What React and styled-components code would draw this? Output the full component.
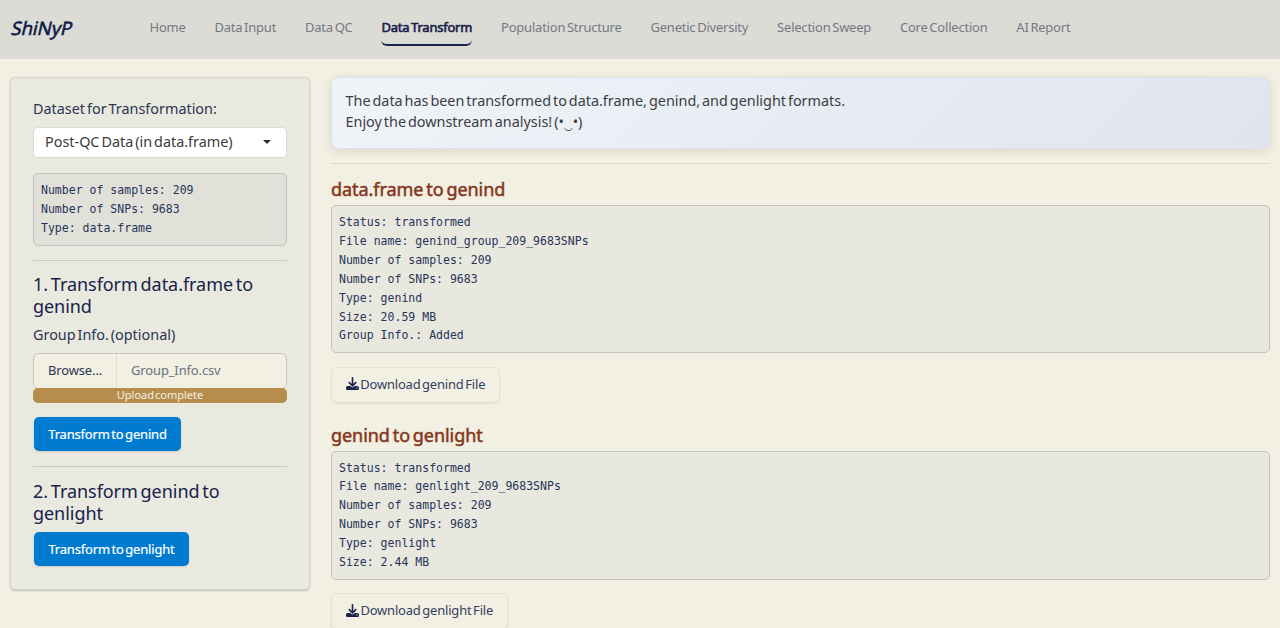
import React from "react";
import styled, { createGlobalStyle } from "styled-components";

const GlobalStyle = createGlobalStyle`
  * { box-sizing: border-box; }
  html, body { margin: 0; padding: 0; overflow: hidden; }
  body {
    background: #f2efe3;
    color: #2b3452;
    font-family: "Noto Sans", "Open Sans", sans-serif;
    font-size: 14.4px;
    line-height: 1.5;
    word-spacing: -1.8px;
  }
`;

const Page = styled.div`
  height: 628px;
  overflow: hidden;
`;

const Navbar = styled.header`
  display: flex;
  align-items: center;
  height: 59px;
  padding: 0 11px 4px 12px;
  background: #dcdbd5;
`;

const Brand = styled.div`
  width: 137.5px;
  color: #0b1a45;
  font-size: 18.5px;
  -webkit-text-stroke: 0.5px currentColor;

  span {
    display: inline-block;
    transform: skewX(-13deg);
    letter-spacing: -0.1px;
  }
`;

const Nav = styled.nav`
  display: flex;
  gap: 28.9px;
`;

const NavLink = styled.a`
  height: 37px;
  padding-top: 9px;
  border-bottom: 2px solid ${(p) => (p.$active ? "#1a2650" : "transparent")};
  border-radius: 6px;
  color: ${(p) => (p.$active ? "#17224a" : "#737885")};
  font-size: 12.96px;
  letter-spacing: -0.2px;
  word-spacing: -1.4px;
  -webkit-text-stroke: ${(p) => (p.$active ? "0.6px currentColor" : "0")};
  line-height: 19px;
  white-space: nowrap;
`;

const Main = styled.main`
  display: grid;
  grid-template-columns: 300px 939px;
  column-gap: 21px;
  align-items: start;
  padding: 18px 10px 0;
`;

const Sidebar = styled.aside`
  height: 513px;
  padding: 19.6px 22px;
  border: 1px solid #d3d4ca;
  border-radius: 5px;
  background: #e9e9df;
  box-shadow: 0 1px 2px rgba(40, 40, 40, 0.25);
`;

const Label = styled.div`
  line-height: 22px;
  color: #2b3452;
`;

const Select = styled.div`
  display: flex;
  align-items: center;
  justify-content: space-between;
  height: 31px;
  margin-top: 7.4px;
  padding: 0 15px 2px 11px;
  border: 1px solid #dcdcd6;
  border-radius: 4px;
  background: #fff;
  color: #3b3b3e;
`;

const Caret = styled.span`
  margin-top: 2px;
  border: 4px solid transparent;
  border-top-color: #303030;
  border-bottom: 0;
`;

const Output = styled.pre`
  margin: ${(p) => p.$top || 0}px 0 0;
  padding: 7px;
  border: 1px solid #c2c3c1;
  border-radius: 5px;
  background: ${(p) => (p.$dark ? "#e1e1d9" : "#e8e8df")};
  color: #28345a;
  font-family: "DejaVu Sans Mono", "Liberation Mono", monospace;
  font-size: 11.52px;
  line-height: 18.9px;
  word-spacing: 0;
`;

const Rule = styled.hr`
  height: 1px;
  margin: ${(p) => p.$top}px 0 0;
  border: 0;
  background: ${(p) => (p.$light ? "#dcdcd3" : "#c8c9c5")};
`;

const StepTitle = styled.h4`
  margin: 13.6px 0 6.5px;
  color: #17224a;
  font-size: 18px;
  font-weight: 400;
  letter-spacing: -0.05px;
  line-height: 21.6px;
`;

const FileInput = styled.div`
  display: flex;
  height: 36px;
  margin-top: 7px;
  border: 1px solid #c6c8c4;
  border-radius: 6px;
  background: #f2efe3;
  font-size: 12.96px;
  letter-spacing: -0.12px;
  line-height: 33px;
`;

const Browse = styled.span`
  width: 83px;
  padding-left: 14px;
  border-right: 1px solid #dddcd3;
`;

const FileName = styled.span`
  padding-left: 14px;
  color: #6b7180;
`;

const Progress = styled.div`
  height: 15px;
  margin-top: -1px;
  border-radius: 5px;
  background: #b68d4c;
  color: #f7f0e2;
  font-size: 11px;
  line-height: 14px;
  text-align: center;
`;

const PrimaryButton = styled.button`
  display: block;
  height: 34px;
  width: ${(p) => p.$width}px;
  margin: ${(p) => p.$top}px 0 0 1px;
  padding: 0 0 1px;
  border: 0;
  border-radius: 5px;
  background: #007bd0;
  box-shadow: 0 1px 2px rgba(0, 0, 0, 0.12);
  color: #fff;
  font: 400 12.96px "Noto Sans", sans-serif;
  letter-spacing: -0.16px;
  word-spacing: -1.6px;
  -webkit-text-stroke: 0.2px currentColor;
`;

const Alert = styled.div`
  height: 72px;
  padding: 11.7px 13.5px;
  border: 1px solid #dae2e7;
  border-radius: 7px;
  background: linear-gradient(135deg, #f0f4f9 0%, #dfe5ee 100%);
  box-shadow: 0 2px 8px rgba(90, 70, 30, 0.14);
  color: #3c3d42;
  line-height: 21.6px;
`;

const ResultTitle = styled.h4`
  margin: ${(p) => p.$top}px 0 0;
  color: #84381c;
  font-size: 18px;
  font-weight: 400;
  letter-spacing: -0.05px;
  -webkit-text-stroke: 0.5px currentColor;
  line-height: 21.6px;
`;

const DownloadButton = styled.button`
  display: flex;
  align-items: center;
  justify-content: center;
  gap: 1.5px;
  width: ${(p) => p.$width}px;
  height: 36px;
  margin-top: 13.4px;
  padding: 0 0 2px;
  border: 1px solid #e4e2d8;
  border-radius: 5px;
  background: #f2efe3;
  box-shadow: 0 1px 2px rgba(0, 0, 0, 0.06);
  color: #35405f;
  font: 400 12.96px "Noto Sans", sans-serif;
  letter-spacing: -0.17px;
  word-spacing: -1.6px;
`;

const DownloadIcon = () => (
  <svg width="13" height="13" viewBox="0 0 512 512" fill="#17224a">
    <path d="M288 32c0-17.700-14.300-32-32-32s-32 14.300-32 32v242.700l-73.400-73.400c-12.500-12.500-32.800-12.500-45.300 0s-12.500 32.800 0 45.300l128 128c12.500 12.500 32.800 12.500 45.300 0l128-128c12.500-12.500 12.500-32.800 0-45.300s-32.800-12.500-45.300 0L288 274.700V32zM64 352c-35.300 0-64 28.700-64 64v32c0 35.300 28.700 64 64 64h384c35.300 0 64-28.700 64-64v-32c0-35.300-28.700-64-64-64H346.500l-45.300 45.300c-25 25-65.500 25-90.500 0L165.500 352H64zm368 56a24 24 0 1 1 0 48 24 24 0 1 1 0-48z" />
  </svg>
);

const tabs = [
  "Home",
  "Data Input",
  "Data QC",
  "Data Transform",
  "Population Structure",
  "Genetic Diversity",
  "Selection Sweep",
  "Core Collection",
  "AI Report",
];

export default function App() {
  return (
    <Page>
      <GlobalStyle />
      <Navbar>
        <Brand><span>ShiNyP</span></Brand>
        <Nav>
          {tabs.map((tab) => (
            <NavLink key={tab} $active={tab === "Data Transform"}>{tab}</NavLink>
          ))}
        </Nav>
      </Navbar>
      <Main>
        <Sidebar>
          <Label>Dataset for Transformation:</Label>
          <Select>
            Post-QC Data (in data.frame)
            <Caret />
          </Select>
          <Output $top={15} $dark>{`Number of samples: 209
Number of SNPs: 9683
Type: data.frame`}</Output>
          <Rule $top={14} />
          <StepTitle>1. Transform data.frame to genind</StepTitle>
          <Label>Group Info. (optional)</Label>
          <FileInput>
            <Browse>Browse...</Browse>
            <FileName>Group_Info.csv</FileName>
          </FileInput>
          <Progress>Upload complete</Progress>
          <PrimaryButton $top={14.5} $width={147}>Transform to genind</PrimaryButton>
          <Rule $top={15} />
          <StepTitle>2. Transform genind to genlight</StepTitle>
          <PrimaryButton $top={8} $width={155}>Transform to genlight</PrimaryButton>
        </Sidebar>
        <section>
          <Alert>
            The data has been transformed to data.frame, genind, and genlight formats.
            <br />
            Enjoy the downstream analysis! (•‿•)
          </Alert>
          <Rule $top={14} $light />
          <ResultTitle $top={15}>data.frame to genind</ResultTitle>
          <Output $top={4.4}>{`Status: transformed
File name: genind_group_209_9683SNPs
Number of samples: 209
Number of SNPs: 9683
Type: genind
Size: 20.59 MB
Group Info.: Added`}</Output>
          <DownloadButton $width={169}>
            <DownloadIcon />
            Download genind File
          </DownloadButton>
          <ResultTitle $top={22.7}>genind to genlight</ResultTitle>
          <Output $top={3.5}>{`Status: transformed
File name: genlight_209_9683SNPs
Number of samples: 209
Number of SNPs: 9683
Type: genlight
Size: 2.44 MB`}</Output>
          <DownloadButton $width={177}>
            <DownloadIcon />
            Download genlight File
          </DownloadButton>
        </section>
      </Main>
    </Page>
  );
}
